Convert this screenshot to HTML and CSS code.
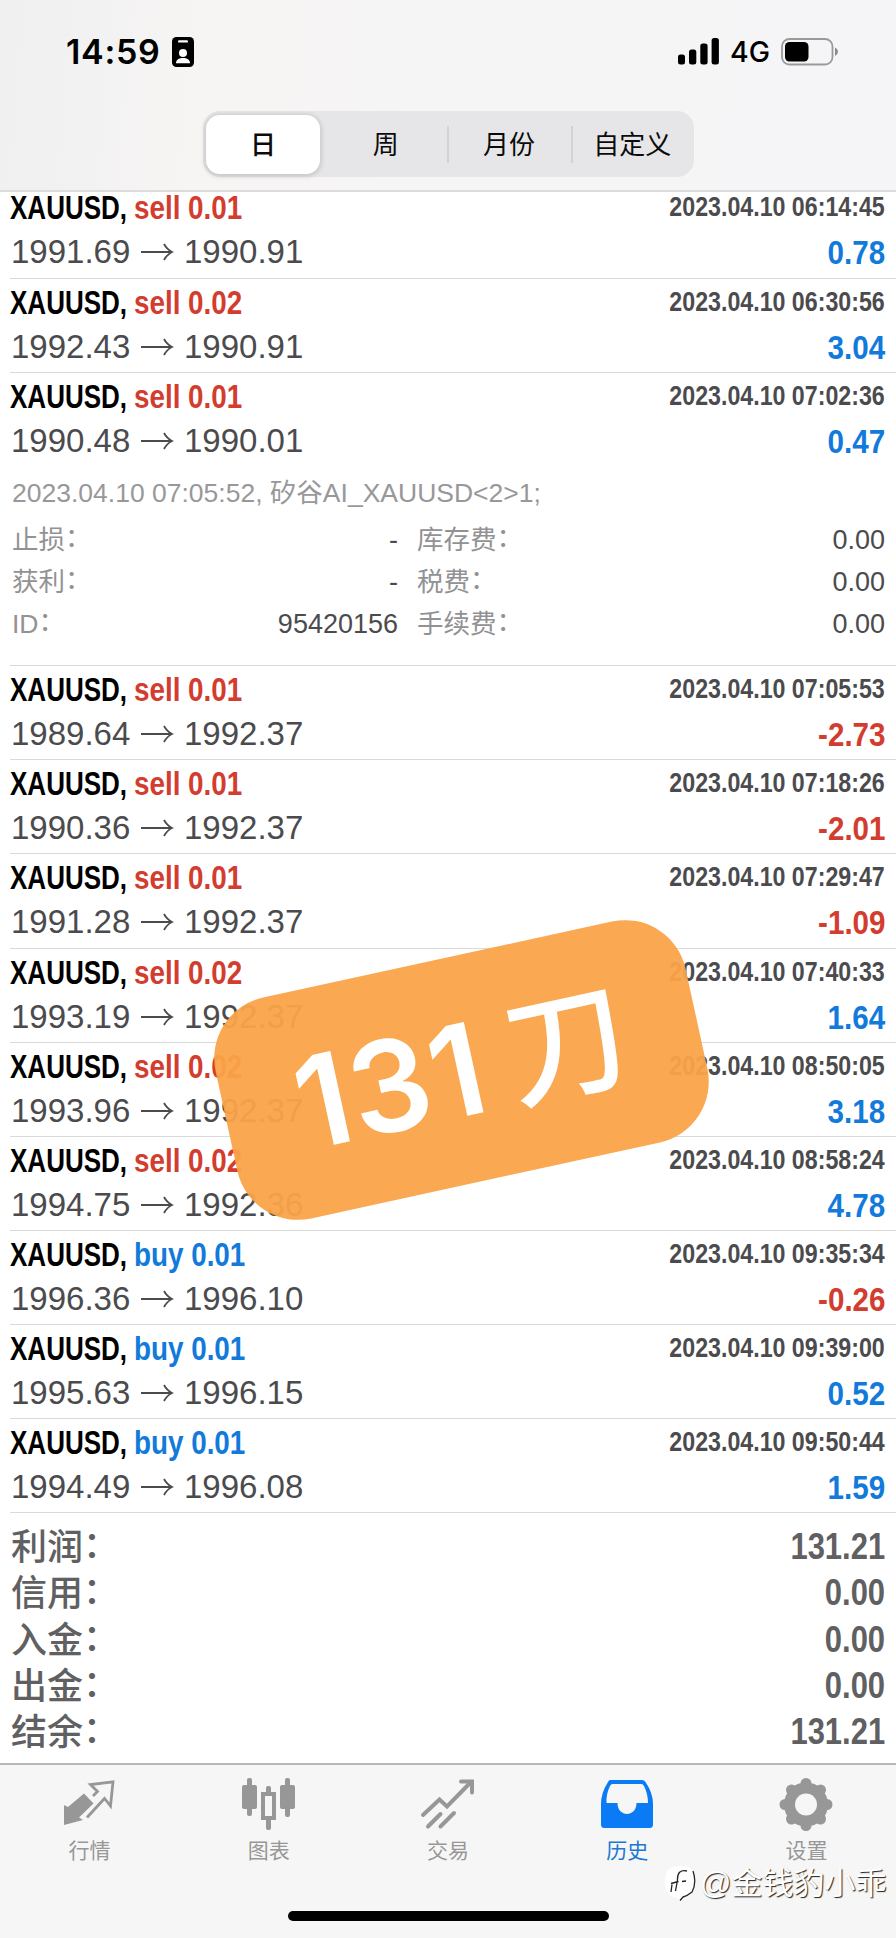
FILE: index.html
```html
<!DOCTYPE html>
<html lang="zh-CN">
<head>
<meta charset="utf-8">
<title>历史</title>
<link rel="stylesheet" href="styles.css">
</head>
<body>
<svg class="defs" aria-hidden="true"><symbol id="arrow" viewBox="0 0 34 20"><path d="M1 10H31.500M24 2Q27 7.500 32 10Q27 12.500 24 18" fill="none" stroke="#4b4b4e" stroke-width="1.800"/></symbol></svg>
<div class="screen">
  <header class="header">
    <div class="status">
      <span class="clock">14:59</span>
      <svg class="badge" viewBox="0 0 22 30"><rect width="22" height="30" rx="4.5"/><rect x="6" y="3.2" width="10" height="2.4" rx="1.2" fill="#fff"/><circle cx="11" cy="16" r="4" fill="#fff"/><path d="M4 26.3C4 22.8 7 21 11 21s7 1.800 7 5.300z" fill="#fff"/></svg>
      <div class="status-right">
        <svg class="signal" viewBox="0 0 41 27"><rect y="16.500" width="7" height="10" rx="2.500"/><rect x="11" y="11.500" width="7.300" height="15" rx="2.500"/><rect x="22.300" y="5.500" width="7.300" height="21" rx="2.500"/><rect x="33.600" y="0" width="7.300" height="26.500" rx="2.500"/></svg>
        <span class="net">4G</span>
        <svg class="battery" viewBox="0 0 58 28"><rect x="1" y="1" width="50.500" height="25.500" rx="7.500" fill="none" stroke="#999" stroke-width="1.800"/><rect x="4" y="4" width="23.500" height="19.500" rx="4.500"/><path d="M54 9.500Q57 11 57 13.700Q57 16.500 54 18z" fill="#8a8a8a"/></svg>
      </div>
    </div>
    <nav class="segments">
      <span class="seg on">日</span><span class="seg">周</span><span class="seg div">月份</span><span class="seg div">自定义</span>
    </nav>
  </header>

  <main class="list">
    <section class="deal"><div class="line"><b class="sym">XAUUSD,</b><b class="side sell">sell 0.01</b><b class="time">2023.04.10 06:14:45</b></div><div class="line"><span class="open">1991.69</span><svg class="arr"><use href="#arrow"/></svg><span>1990.91</span><b class="pl up">0.78</b></div></section>
    <section class="deal"><div class="line"><b class="sym">XAUUSD,</b><b class="side sell">sell 0.02</b><b class="time">2023.04.10 06:30:56</b></div><div class="line"><span class="open">1992.43</span><svg class="arr"><use href="#arrow"/></svg><span>1990.91</span><b class="pl up">3.04</b></div></section>
    <section class="deal expanded"><div class="line"><b class="sym">XAUUSD,</b><b class="side sell">sell 0.01</b><b class="time">2023.04.10 07:02:36</b></div><div class="line"><span class="open">1990.48</span><svg class="arr"><use href="#arrow"/></svg><span>1990.01</span><b class="pl up">0.47</b></div>
      <p class="note">2023.04.10 07:05:52, 矽谷AI_XAUUSD&lt;2&gt;1;</p>
      <div class="details">
        <span>止损<i>：</i></span><em>-</em><span class="fee">库存费<i>：</i></span><em>0.00</em>
        <span>获利<i>：</i></span><em>-</em><span class="fee">税费<i>：</i></span><em>0.00</em>
        <span>ID<i>：</i></span><em>95420156</em><span class="fee">手续费<i>：</i></span><em>0.00</em>
      </div>
    </section>
    <section class="deal"><div class="line"><b class="sym">XAUUSD,</b><b class="side sell">sell 0.01</b><b class="time">2023.04.10 07:05:53</b></div><div class="line"><span class="open">1989.64</span><svg class="arr"><use href="#arrow"/></svg><span>1992.37</span><b class="pl down">-2.73</b></div></section>
    <section class="deal"><div class="line"><b class="sym">XAUUSD,</b><b class="side sell">sell 0.01</b><b class="time">2023.04.10 07:18:26</b></div><div class="line"><span class="open">1990.36</span><svg class="arr"><use href="#arrow"/></svg><span>1992.37</span><b class="pl down">-2.01</b></div></section>
    <section class="deal"><div class="line"><b class="sym">XAUUSD,</b><b class="side sell">sell 0.01</b><b class="time">2023.04.10 07:29:47</b></div><div class="line"><span class="open">1991.28</span><svg class="arr"><use href="#arrow"/></svg><span>1992.37</span><b class="pl down">-1.09</b></div></section>
    <section class="deal"><div class="line"><b class="sym">XAUUSD,</b><b class="side sell">sell 0.02</b><b class="time">2023.04.10 07:40:33</b></div><div class="line"><span class="open">1993.19</span><svg class="arr"><use href="#arrow"/></svg><span>1992.37</span><b class="pl up">1.64</b></div></section>
    <section class="deal"><div class="line"><b class="sym">XAUUSD,</b><b class="side sell">sell 0.02</b><b class="time">2023.04.10 08:50:05</b></div><div class="line"><span class="open">1993.96</span><svg class="arr"><use href="#arrow"/></svg><span>1992.37</span><b class="pl up">3.18</b></div></section>
    <section class="deal"><div class="line"><b class="sym">XAUUSD,</b><b class="side sell">sell 0.02</b><b class="time">2023.04.10 08:58:24</b></div><div class="line"><span class="open">1994.75</span><svg class="arr"><use href="#arrow"/></svg><span>1992.36</span><b class="pl up">4.78</b></div></section>
    <section class="deal"><div class="line"><b class="sym">XAUUSD,</b><b class="side buy">buy 0.01</b><b class="time">2023.04.10 09:35:34</b></div><div class="line"><span class="open">1996.36</span><svg class="arr"><use href="#arrow"/></svg><span>1996.10</span><b class="pl down">-0.26</b></div></section>
    <section class="deal"><div class="line"><b class="sym">XAUUSD,</b><b class="side buy">buy 0.01</b><b class="time">2023.04.10 09:39:00</b></div><div class="line"><span class="open">1995.63</span><svg class="arr"><use href="#arrow"/></svg><span>1996.15</span><b class="pl up">0.52</b></div></section>
    <section class="deal"><div class="line"><b class="sym">XAUUSD,</b><b class="side buy">buy 0.01</b><b class="time">2023.04.10 09:50:44</b></div><div class="line"><span class="open">1994.49</span><svg class="arr"><use href="#arrow"/></svg><span>1996.08</span><b class="pl up">1.59</b></div></section>
  </main>

  <section class="summary">
    <div class="sum"><span>利润<i>：</i></span><b>131.21</b></div>
    <div class="sum"><span>信用<i>：</i></span><b>0.00</b></div>
    <div class="sum"><span>入金<i>：</i></span><b>0.00</b></div>
    <div class="sum"><span>出金<i>：</i></span><b>0.00</b></div>
    <div class="sum"><span>结余<i>：</i></span><b>131.21</b></div>
  </section>

  <footer class="footer">
    <nav class="tabs">
      <a class="tab"><svg viewBox="0 0 56 56"><path d="M2 27L6 29L22 15.500L31.500 25.500L17 39.500L21 42L2 47z" fill="#979797"/><path d="M31 18L35.500 13.500L28.500 6.500L51 3.800L48.500 28L42.500 20.500L25 39.500" fill="none" stroke="#979797" stroke-width="2.800"/></svg>行情</a>
      <a class="tab"><svg viewBox="0 0 56 56"><g fill="#979797"><rect x="6" y="0" width="5" height="38" rx="2"/><rect x="1" y="7" width="15" height="24" rx="2"/><rect x="44" y="0" width="5" height="39" rx="2"/><rect x="39" y="7" width="15" height="24" rx="2"/><rect x="25" y="8" width="5" height="8" rx="2"/><rect x="25" y="40" width="5" height="12" rx="2"/></g><rect x="22" y="16" width="11" height="24" fill="none" stroke="#979797" stroke-width="4"/></svg>图表</a>
      <a class="tab"><svg viewBox="0 0 56 56"><path d="M3 37L19.500 21.500L27 28.500L50 5M8 48.500L20.500 36M20.500 48.500L34 35" fill="none" stroke="#979797" stroke-width="4" stroke-linecap="round"/><path d="M41 3.500H52V14.500" fill="none" stroke="#979797" stroke-width="4" stroke-linecap="round"/></svg>交易</a>
      <a class="tab active"><svg viewBox="0 0 56 56"><path fill-rule="evenodd" fill="#0a7bf5" d="M11 2H43Q45 2 46.500 4Q54 15 54 26V46.500Q54 50 50.500 50H5.500Q2 50 2 46.500V26Q2 15 9 4Q10 2 11 2zM13.500 6Q12 6 11 8Q7 16 7.500 25H18.500C18.500 39.500 37.500 39.500 37.500 25H49Q49 16 45 8Q44 6 42.500 6z"/></svg>历史</a>
      <a class="tab"><svg viewBox="0 0 56 56"><circle cx="28" cy="26.500" r="16.500" fill="none" stroke="#979797" stroke-width="11"/><g stroke="#979797" stroke-width="11" stroke-linecap="round"><path d="M28 5.500V47.500M7 26.500H49M13.500 12L42.500 41M42.500 12L13.500 41"/></g><circle cx="28" cy="26.500" r="11" fill="#f6f6f6"/></svg>设置</a>
    </nav>
    <div class="home"></div>
  </footer>

  <div class="sticker"><span class="n">131</span><span class="k">刀</span></div>
  <div class="mark"><svg viewBox="0 0 32 36"><path fill="#fff" d="M0 14Q0 1 13 0H20Q31 2 31 16Q30 28 17 31L14 34Q12 31 8 31Q0 28 0 14z"/><path d="M22 5Q12 3 12.500 14L10.500 25M6 17.500L13.500 15.500M17 15.500L21 15M7 18.500L6 26M28 5Q32 17 27 26Q22 30 18 31L15 34.500" fill="none" stroke="#222" stroke-width="1.300"/></svg><span>@金钱豹小乖</span></div>
</div>
</body>
</html>
```
FILE: styles.css
```css
* { box-sizing: border-box; }
body { margin: 0; background: #fff; font-family: "Liberation Sans", "Noto Sans CJK SC", sans-serif; }
i, em { font-style: normal; }
.defs { position: absolute; width: 0; height: 0; }
.screen { position: relative; width: 896px; height: 1938px; overflow: hidden; display: flex; flex-direction: column; }

.header { position: relative; z-index: 1; height: 192px; flex: none; border-bottom: 2px solid #dcdcde; background: linear-gradient(95deg, #f0f0f0 0, #f3f2f2 12%, #f7f5f4 22%, #f6f5f5 45%, #f5f5f6 75%, #f5f5f8 100%); }
.status { display: flex; align-items: center; height: 111px; padding: 0 57px 8px 66px; }
.clock { font: 600 34px/40px Inter, sans-serif; width: 106px; letter-spacing: 0.700px; }
.badge { width: 22px; height: 30px; }
.status-right { margin-left: auto; display: flex; align-items: center; }
.signal { width: 41px; height: 27px; }
.net { font: 500 28.500px/34px Inter, sans-serif; margin-left: 11px; width: 51px; }
.battery { width: 58px; height: 28px; }
.segments { display: flex; width: 491px; height: 66px; margin-left: 203px; border-radius: 17px; background: #e6e6e8; }
.seg { position: relative; flex: 1; display: flex; align-items: center; justify-content: center; font-size: 26px; line-height: 38px; color: #0b0b0b; padding-top: 1px; }
.seg.on { flex: none; width: 114px; height: 59px; margin: 4px 4px 0 3px; border-radius: 14px; background: #fff; box-shadow: 0 1px 4px 2px rgba(0,0,0,.12); font-weight: 500; }
.seg.div::before { content: ""; position: absolute; left: 0; top: 15px; width: 2px; height: 37px; background: #d2d2d5; }

.list { margin-top: -7.600px; padding-left: 10px; flex: none; }
.deal { height: 94.150px; padding: 1px 11px 0 0; border-bottom: 1px solid #dadada; }
.deal.expanded { height: 293.400px; }
.line { display: flex; align-items: center; height: 44px; font-size: 33px; line-height: 44px; color: #4b4b4e; white-space: nowrap; }
.line + .line { margin-top: 1px; }
.sym { width: 124px; font-size: 34px; color: #000; transform: scaleX(.765); transform-origin: 0 50%; }
.side { font-size: 34px; transform: scaleX(.818); transform-origin: 0 50%; }
.sell { color: #d23d2f; }
.buy, .up { color: #117adb; }
.down { color: #d23d2f; }
.time { margin-left: auto; font-size: 27px; line-height: 46px; transform: scaleX(.859); transform-origin: 100% 50%; }
.open { width: 130px; padding-left: 1px; }
.arr { width: 34px; height: 20px; margin-right: 10px; }
.pl { margin-left: auto; font-size: 34px; line-height: 42px; transform: scaleX(.87); transform-origin: 100% 50%; }

.note { margin: 8.300px 0 5px 2px; font-size: 26.500px; line-height: 44px; color: #98989a; }
.details { display: grid; grid-template-columns: 180px 206px 200px 1fr; margin-left: 2px; grid-auto-rows: 41.800px; line-height: 41.800px; font-size: 26.500px; color: #929294; }
.details em { font-size: 27px; color: #4b4b4e; text-align: right; }
.details i, .sum i { position: relative; top: -2px; }
.fee { padding-left: 19px; }

.summary { padding: 11px 11px 0 11px; height: 250px; flex: none; color: #606062; }
.sum { display: flex; justify-content: space-between; height: 46.100px; line-height: 46.100px; font-size: 36px; }
.sum span { font-family: "Noto Sans CJK SC", sans-serif; font-weight: 500; margin-top: -3px; }
.sum b { transform: scaleX(.86); transform-origin: 100% 50%; }

.footer { flex: 1; background: #f6f6f6; border-top: 2px solid #b8b8b8; display: flex; flex-direction: column; align-items: center; }
.tabs { display: flex; width: 100%; height: 146px; padding-top: 13px; }
.tab { flex: 1; display: flex; flex-direction: column; align-items: center; font-size: 21px; line-height: 30px; color: #979797; }
.tab svg { width: 56px; height: 56px; margin-bottom: 2px; }
.tab.active { color: #1b78d2; }
.home { width: 321px; height: 10px; border-radius: 5px; background: #000; }

.sticker { position: absolute; left: 221px; top: 957px; width: 481px; height: 226px; border-radius: 62px; background: rgba(250,163,72,.95); transform: rotate(-12.300deg); display: flex; align-items: center; justify-content: center; color: #fff; }
.sticker .n { font: 600 127px/150px Inter, sans-serif; letter-spacing: 1px; }
.sticker .k { font: 500 122px/150px "Noto Sans CJK SC", sans-serif; margin: -22px 0 0 24px; }
.mark { position: absolute; left: 665px; top: 1865px; display: flex; align-items: center; height: 38px; font-size: 31px; line-height: 38px; color: #fff; text-shadow: 1px 1px 1px #222; white-space: nowrap; }
.mark svg { width: 32px; height: 36px; margin-right: 3px; }
```
